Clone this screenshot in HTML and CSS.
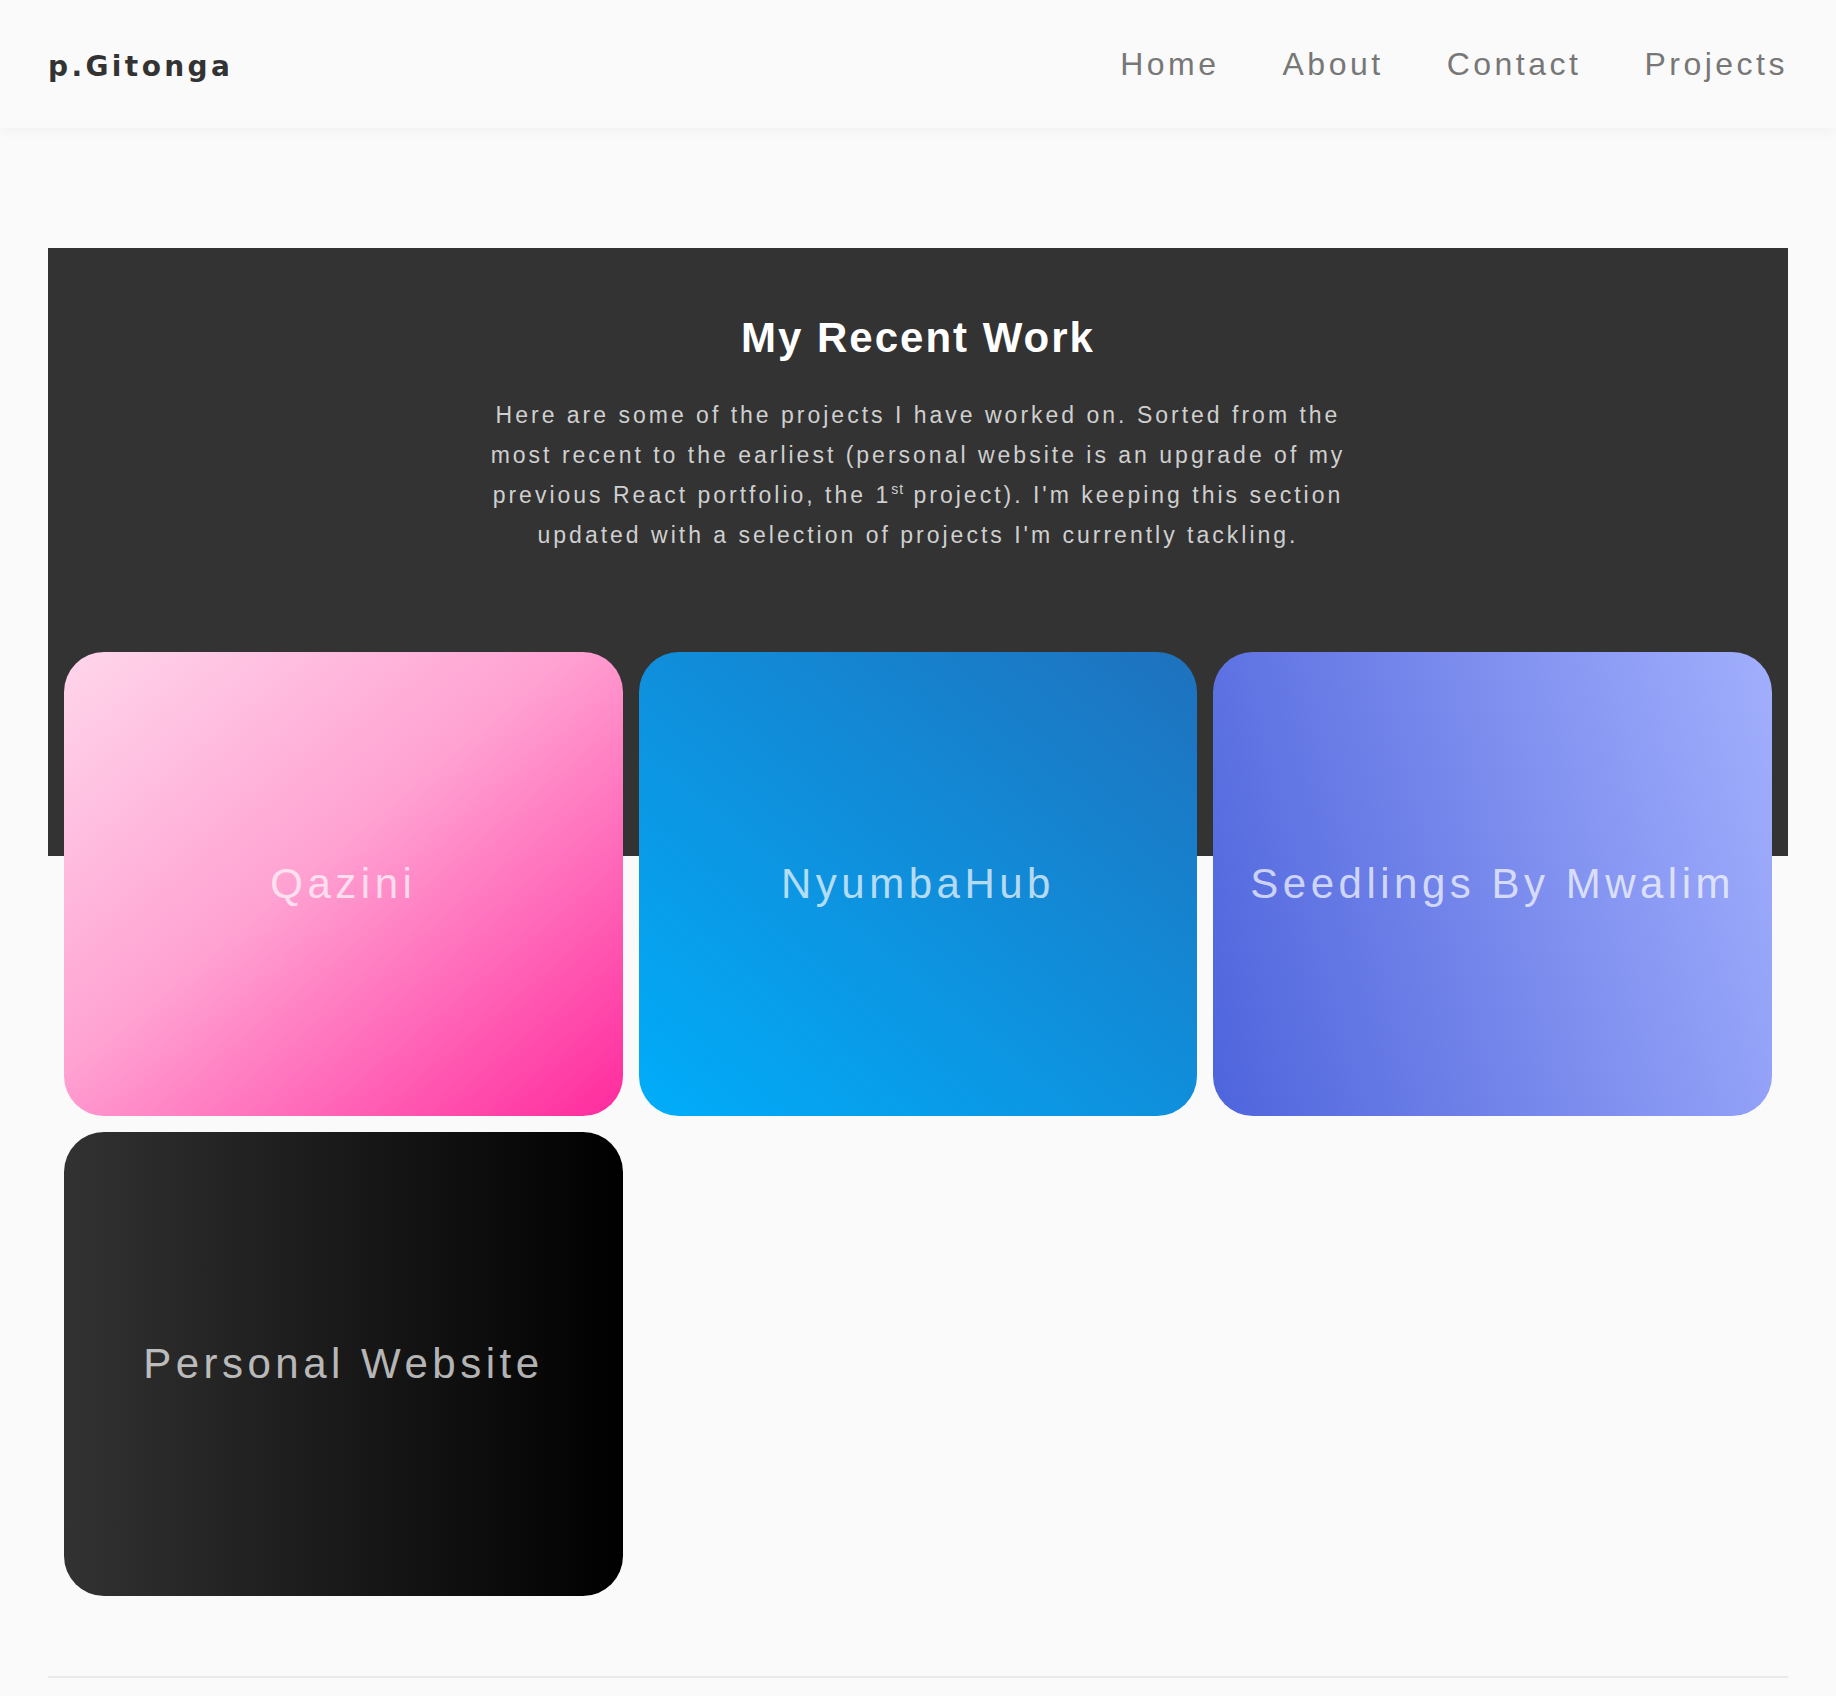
FILE: index.html
```html
<!DOCTYPE html>
<html lang="en">
<head>
<meta charset="utf-8">
<title>p.Gitonga — Projects</title>
<link rel="stylesheet" href="styles.css">
</head>
<body>
<header class="site-header">
  <a class="logo" href="#">p.Gitonga</a>
  <nav class="nav">
    <a class="nav-link" href="#">Home</a>
    <a class="nav-link" href="#">About</a>
    <a class="nav-link" href="#">Contact</a>
    <a class="nav-link" href="#">Projects</a>
  </nav>
</header>
<main class="work">
  <section class="intro">
    <h1 class="intro-title">My Recent Work</h1>
    <p class="intro-text">Here are some of the projects I have worked on. Sorted from the most recent to the earliest (personal website is an upgrade of my previous React portfolio, the 1<sup class="ordinal">st</sup> project). I'm keeping this section updated with a selection of projects I'm currently tackling.</p>
  </section>
  <div class="grid">
    <a class="card card-qazini" href="#"><span class="card-title">Qazini</span></a>
    <a class="card card-nyumba" href="#"><span class="card-title">NyumbaHub</span></a>
    <a class="card card-seedlings" href="#"><span class="card-title">Seedlings By Mwalim</span></a>
    <a class="card card-personal" href="#"><span class="card-title">Personal Website</span></a>
  </div>
</main>
<hr class="divider">
</body>
</html>
```

FILE: styles.css
```css
* {
  box-sizing: border-box;
}

body {
  margin: 0;
  background: #fafafa;
  font-family: "Liberation Sans", Arial, sans-serif;
  color: #333;
}

.site-header {
  height: 128px;
  display: flex;
  align-items: center;
  justify-content: space-between;
  padding: 0 48px;
  background: #fafafa;
  box-shadow: 0 4px 12px rgba(0, 0, 0, 0.035);
}

.logo {
  font-family: "DejaVu Sans", "Liberation Sans", sans-serif;
  font-size: 28px;
  font-weight: 700;
  letter-spacing: 3.4px;
  color: #333;
  text-decoration: none;
  padding-top: 4px;
}

.nav {
  display: flex;
  gap: 63px;
}

.nav-link {
  font-size: 32px;
  letter-spacing: 3.5px;
  color: #777;
  text-decoration: none;
}

.work {
  margin: 120px 48px 0;
  padding: 65px 16px 0;
  background: linear-gradient(#333, #333) top / 100% 608px no-repeat;
}

.intro-title {
  margin: 0;
  font-size: 42px;
  line-height: 50px;
  letter-spacing: 2px;
  font-weight: 700;
  color: #fff;
  text-align: center;
}

.intro-text {
  margin: 32px auto 0;
  max-width: 880px;
  font-size: 23px;
  line-height: 40px;
  letter-spacing: 3px;
  color: #cfcfcf;
  text-align: center;
}

.ordinal {
  font-size: 14px;
  line-height: 1;
  letter-spacing: 1px;
  vertical-align: 9px;
}

.grid {
  margin-top: 97px;
  display: grid;
  grid-template-columns: repeat(3, 1fr);
  gap: 16px;
}

.card {
  height: 464px;
  border-radius: 40px;
  display: flex;
  align-items: center;
  justify-content: center;
  text-decoration: none;
  color: rgba(255, 255, 255, 0.7);
}

.card-title {
  font-size: 42px;
  letter-spacing: 4.5px;
}

.card-qazini {
  background: linear-gradient(to bottom right, #ffd6eb 0%, #ffa2d2 45%, #ff2a9d 100%);
}

.card-nyumba {
  background: linear-gradient(to top right, #00adfa 0%, #1f71bd 100%);
}

.card-seedlings {
  background: linear-gradient(75deg, #4e64dc 0%, #a2affd 100%);
}

.card-personal {
  background: linear-gradient(90deg, #323232 0%, #000 100%);
}

.divider {
  margin: 80px 48px 0;
  border: 0;
  border-top: 2px solid #e9e9e9;
}
```
